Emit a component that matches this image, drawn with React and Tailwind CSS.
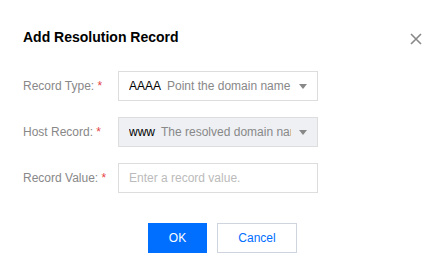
export default function App() {
  const font = { fontFamily: '"Liberation Sans", Arial, sans-serif' }
  return (
    <div className="w-[445px] h-[277px] bg-white relative" style={font}>
      <div className="flex items-center justify-between pl-[23px] pr-[23px] pt-[27px]">
        <h2 className="text-[14px] leading-[20px] font-bold text-[#000]">Add Resolution Record</h2>
        <svg width="12" height="12" viewBox="0 0 12 12" className="mt-[3px]">
          <path d="M1 1L11 11M11 1L1 11" stroke="#888" strokeWidth="1.6" />
        </svg>
      </div>

      <div className="flex flex-col gap-[16px] pl-[23px] mt-[24px]">
        <div className="flex items-center">
          <label className="w-[95px] text-[12px] text-[#888]">
            Record Type: <span className="text-[#e54545]">*</span>
          </label>
          <div className="w-[200px] h-[30px] border border-[#dddddd] bg-white flex items-center pl-[10px] pr-[10px]">
            <div className="flex-1 overflow-hidden whitespace-nowrap text-[12px]">
              <span className="text-[#000]">AAAA</span>
              <span className="text-[#888] ml-[6px]">Point the domain name to an IPv6 address</span>
            </div>
            <svg width="8" height="5" viewBox="0 0 8 5" className="ml-[8px] shrink-0">
              <path d="M0 0H8L4 5Z" fill="#888" />
            </svg>
          </div>
        </div>

        <div className="flex items-center">
          <label className="w-[95px] text-[12px] text-[#888]">
            Host Record: <span className="text-[#e54545]">*</span>
          </label>
          <div className="w-[200px] h-[30px] border border-[#dddddd] bg-[#eef0f4] flex items-center pl-[10px] pr-[10px]">
            <div className="flex-1 overflow-hidden whitespace-nowrap text-[12px]">
              <span className="text-[#000]">www</span>
              <span className="text-[#888] ml-[6px]">The resolved domain name is www.example.com</span>
            </div>
            <svg width="8" height="5" viewBox="0 0 8 5" className="ml-[8px] shrink-0">
              <path d="M0 0H8L4 5Z" fill="#888" />
            </svg>
          </div>
        </div>

        <div className="flex items-center">
          <label className="w-[95px] text-[12px] text-[#888]">
            Record Value: <span className="text-[#e54545]">*</span>
          </label>
          <input
            className="w-[200px] h-[30px] border border-[#dddddd] bg-white px-[10px] text-[12px] outline-none placeholder:text-[#bbb]"
            placeholder="Enter a record value."
            style={font}
          />
        </div>
      </div>

      <div className="flex justify-center gap-[10px] mt-[30px]">
        <button className="w-[59px] h-[30px] bg-[#006eff] text-white text-[12px]" style={font}>OK</button>
        <button className="w-[80px] h-[30px] border border-[#cfd5de] bg-white text-[#006eff] text-[12px]" style={font}>Cancel</button>
      </div>
    </div>
  )
}
